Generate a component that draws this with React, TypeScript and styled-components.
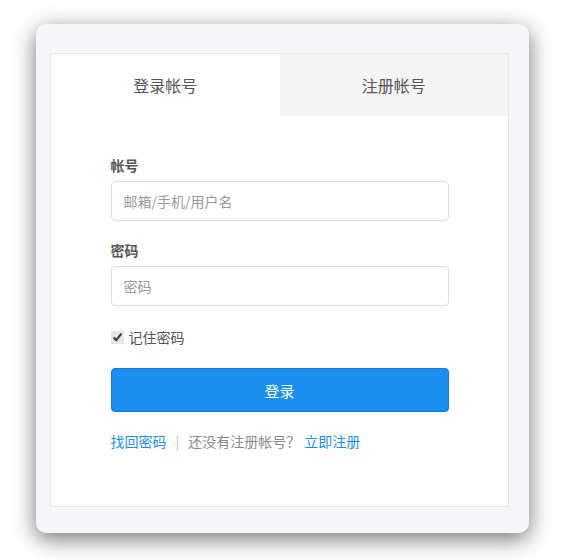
import React, { useState } from 'react';
import styled, { createGlobalStyle } from 'styled-components';

const GlobalStyle = createGlobalStyle`
  html, body {
    margin: 0;
    padding: 0;
    background: #ffffff;
  }
  body {
    font-family: "Noto Sans CJK SC", "Noto Sans", "Liberation Sans", sans-serif;
    color: #555;
  }
`;

const Page = styled.div`
  width: 566px;
  height: 560px;
  padding: 24px 0 0 36px;
  box-sizing: border-box;
`;

const Card = styled.div`
  width: 493px;
  height: 509px;
  box-sizing: border-box;
  padding: 29px 20px 26px 14px;
  background: #f4f7fa;
  border-radius: 10px;
  box-shadow: 0 6px 22px rgba(0, 0, 0, 0.55);
`;

const Panel = styled.div`
  height: 100%;
  box-sizing: border-box;
  background: #fff;
  border: 1px solid #e2e8ee;
  display: flex;
  flex-direction: column;
`;

const Tabs = styled.div`
  display: grid;
  grid-template-columns: 1fr 1fr;
  height: 62px;
`;

const Tab = styled.button<{ $active?: boolean }>`
  border: none;
  margin: 0;
  padding: 0;
  font-family: inherit;
  font-size: 16px;
  color: #555;
  background: ${p => (p.$active ? '#fff' : '#f4f4f4')};
  cursor: pointer;
  outline: none;
`;

const Form = styled.form`
  width: 338px;
  margin: 0 auto;
  padding-top: 39px;
  display: flex;
  flex-direction: column;
`;

const Label = styled.label`
  font-size: 14px;
  line-height: 20px;
  font-weight: bold;
  color: #555;
  margin-bottom: 6px;
`;

const Input = styled.input`
  height: 40px;
  box-sizing: border-box;
  border: 1px solid #dedede;
  border-radius: 4px;
  padding: 0 12px;
  font-family: inherit;
  font-size: 14px;
  color: #333;
  outline: none;
  margin-bottom: 19px;

  &::placeholder {
    color: #999;
  }
`;

const Remember = styled.label`
  display: flex;
  align-items: center;
  gap: 3px;
  font-size: 14px;
  line-height: 20px;
  color: #555;
  margin-top: 2px;
  margin-bottom: 21px;

  input {
    width: 13px;
    height: 13px;
    margin: 0 2px 0 0;
    accent-color: #e6e6e6;
  }
`;

const Submit = styled.button`
  height: 44px;
  border: 1px solid #1479d4;
  border-radius: 4px;
  background: #1a8fee;
  color: #fff;
  font-family: inherit;
  font-size: 15px;
  cursor: pointer;
  margin-bottom: 19px;
`;

const Links = styled.div`
  font-size: 14px;
  line-height: 20px;
  color: #888;
  display: flex;
  align-items: center;
`;

const Link = styled.a`
  color: #1a8fee;
  text-decoration: none;
`;

const Sep = styled.span`
  color: #bbb;
  margin: 0 9px;
`;

const Hint = styled.span`
  margin-right: 4px;
`;

export default function App() {
  const [tab, setTab] = useState<'login' | 'register'>('login');
  return (
    <>
      <GlobalStyle />
      <Page>
        <Card>
          <Panel>
            <Tabs>
              <Tab $active={tab === 'login'} onClick={() => setTab('login')}>登录帐号</Tab>
              <Tab $active={tab === 'register'} onClick={() => setTab('register')}>注册帐号</Tab>
            </Tabs>
            <Form onSubmit={e => e.preventDefault()}>
              <Label>帐号</Label>
              <Input placeholder="邮箱/手机/用户名" />
              <Label>密码</Label>
              <Input type="password" placeholder="密码" />
              <Remember>
                <input type="checkbox" defaultChecked />
                记住密码
              </Remember>
              <Submit type="submit">登录</Submit>
              <Links>
                <Link href="#">找回密码</Link>
                <Sep>|</Sep>
                <Hint>还没有注册帐号？</Hint>
                <Link href="#">立即注册</Link>
              </Links>
            </Form>
          </Panel>
        </Card>
      </Page>
    </>
  );
}
